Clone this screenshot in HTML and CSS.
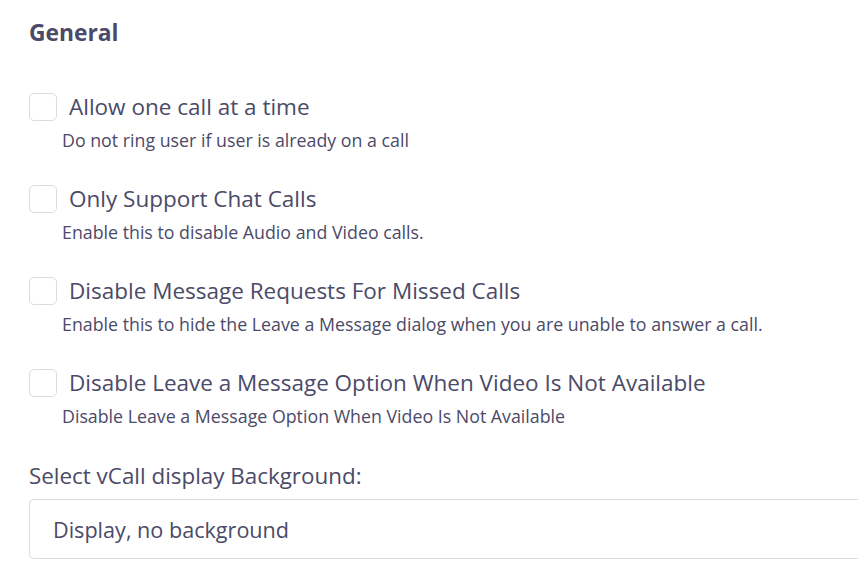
FILE: index.html
```html
<!DOCTYPE html>
<html>
<head>
    <title>General Settings</title>
    <link rel="stylesheet" href="styles.css">
</head>
<body>
    <div class="settings">
        <h2 class="section-title">General</h2>

        <div class="option">
            <label class="option-row">
                <input type="checkbox" class="check">
                <span class="option-label">Allow one call at a time</span>
            </label>
            <p class="option-help">Do not ring user if user is already on a call</p>
        </div>

        <div class="option">
            <label class="option-row">
                <input type="checkbox" class="check">
                <span class="option-label">Only Support Chat Calls</span>
            </label>
            <p class="option-help">Enable this to disable Audio and Video calls.</p>
        </div>

        <div class="option">
            <label class="option-row">
                <input type="checkbox" class="check">
                <span class="option-label">Disable Message Requests For Missed Calls</span>
            </label>
            <p class="option-help">Enable this to hide the Leave a Message dialog when you are unable to answer a call.</p>
        </div>

        <div class="option">
            <label class="option-row">
                <input type="checkbox" class="check">
                <span class="option-label">Disable Leave a Message Option When Video Is Not Available</span>
            </label>
            <p class="option-help">Disable Leave a Message Option When Video Is Not Available</p>
        </div>

        <label class="select-label" for="bgSelect">Select vCall display Background:</label>
        <div class="select-box" id="bgSelect">Display, no background</div>
    </div>
</body>
</html>
```

FILE: styles.css
```css
body {
    margin: 0;
    padding: 0;
    background: #fff;
    font-family: "Open Sans", "Noto Sans", sans-serif;
    color: #4b4a68;
    overflow: hidden;
}

.settings {
    padding: 18px 0 0 29px;
}

.section-title {
    margin: 0 0 45px 0;
    font-size: 22.8px;
    font-weight: 700;
    line-height: 30px;
}

.option {
    margin-bottom: 33px;
}

.option:last-of-type {
    margin-bottom: 32px;
}

.option-row {
    display: flex;
    align-items: center;
    gap: 12px;
}

.check {
    appearance: none;
    -webkit-appearance: none;
    margin: 0;
    width: 28px;
    height: 28px;
    border: 1px solid #dcdce0;
    border-radius: 5px;
    background: #fff;
    flex: none;
}

.option-label {
    font-size: 22.5px;
    line-height: 28px;
}

.option-help {
    margin: 7px 0 0 33px;
    font-size: 17.8px;
    line-height: 24px;
}

.select-label {
    display: block;
    font-size: 22.4px;
    line-height: 30px;
    margin-bottom: 8px;
}

.select-box {
    height: 58px;
    border: 1px solid #dcdce0;
    border-right: none;
    border-radius: 5px 0 0 5px;
    display: flex;
    align-items: center;
    padding-left: 23px;
    font-size: 21.6px;
}
```
